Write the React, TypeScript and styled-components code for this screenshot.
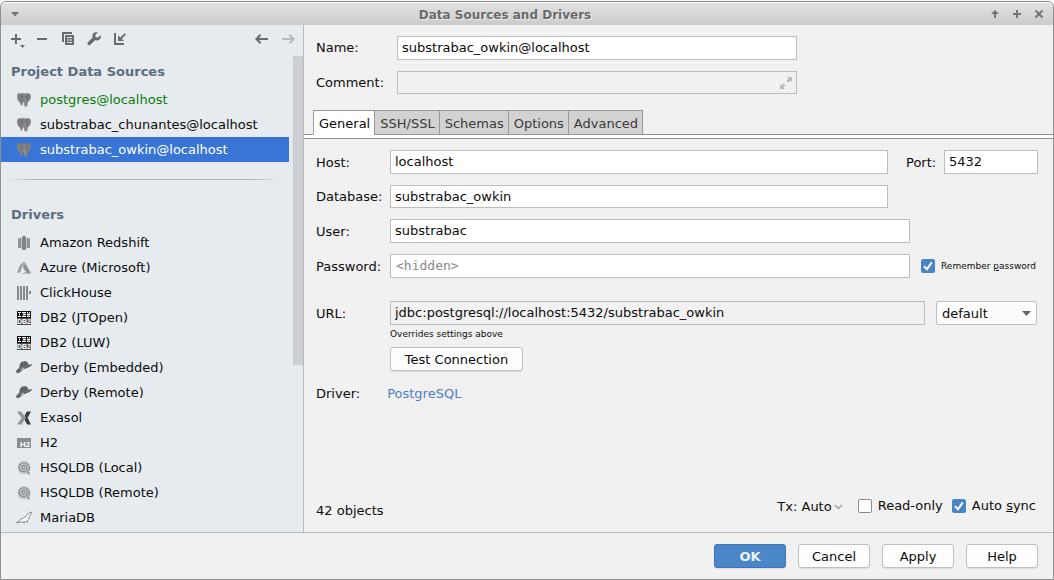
import React, { ReactNode, useState } from "react";
import styled, { createGlobalStyle, css } from "styled-components";

const GlobalStyle = createGlobalStyle`
  *, *::before, *::after { box-sizing: border-box; }
  body { margin: 0; background: #f7f7f7; }
  body, button, input, select {
    font-family: "DejaVu Sans", sans-serif;
    font-size: 13px;
    line-height: 16px;
    color: #0c0c0c;
  }
  button { border: 0; padding: 0; background: none; }
  svg { display: block; flex: none; }
`;

/* ---------- window frame ---------- */

const Page = styled.div`
  height: 100vh;
  min-height: 480px;
  padding-top: 1px;
`;

const Window = styled.div`
  height: 100%;
  display: flex;
  flex-direction: column;
  border: 1px solid #8f8f8f;
  border-radius: 6px 6px 0 0;
  background: #f1f1f1;
  overflow: hidden;
`;

const TitleBar = styled.header`
  flex: none;
  display: flex;
  align-items: center;
  height: 23px;
  padding: 0 3px;
  border-top: 1px solid #f6f6f6;
  background: linear-gradient(#e2e2e2, #cbcbcb);
`;

const Title = styled.h1`
  flex: 1;
  margin: 0;
  padding-top: 2px;
  text-align: center;
  font-size: 12px;
  line-height: 16px;
  font-weight: bold;
  color: #6a6a6a;
  text-shadow: 1px 1px 0 #ececec;
`;

const FrameButton = styled.button`
  width: 22px;
  height: 22px;
  display: grid;
  place-items: center;
  color: #747474;
`;

const Body = styled.div`
  flex: 1;
  min-height: 0;
  display: flex;
`;

/* ---------- sidebar ---------- */

const Sidebar = styled.aside`
  flex: none;
  width: 303px;
  display: flex;
  flex-direction: column;
  background: #e6ebf0;
  border-right: 1px solid #bababa;
`;

const Toolbar = styled.div`
  flex: none;
  display: flex;
  gap: 6px;
  height: 31px;
  padding: 4px 5px 0 5px;
`;

const Spacer = styled.div`
  flex: 1;
`;

const ToolButton = styled.button<{ $disabled?: boolean }>`
  width: 20px;
  height: 20px;
  color: ${(p) => (p.$disabled ? "#b6babd" : "#6b6b6b")};
`;

const ListArea = styled.div`
  flex: 1;
  min-height: 0;
  display: flex;
`;

const ListScroll = styled.nav`
  flex: 1;
  padding-right: 4px;
  overflow: hidden;
`;

const ScrollTrack = styled.div`
  width: 10px;
`;

const ScrollThumb = styled.div`
  height: 65%;
  background: #cdd1d6;
  border: 1px solid #c6cacf;
`;

const GroupTitle = styled.h2`
  margin: 0;
  padding: 8px 10px 7px;
  font-size: 13px;
  line-height: 16px;
  font-weight: bold;
  color: #5f6d7b;
`;

const List = styled.ul`
  list-style: none;
  margin: 0;
  padding: 0;
`;

const ItemButton = styled.button<{ $selected?: boolean; $tone?: string }>`
  width: 100%;
  height: 25px;
  display: flex;
  align-items: center;
  gap: 8px;
  padding-left: 15px;
  text-align: left;
  color: ${(p) => (p.$selected ? "#fff" : p.$tone || "#0c0c0c")};
  background: ${(p) => (p.$selected ? "#3875d6" : "transparent")};
`;

const Separator = styled.hr`
  height: 1px;
  margin: 17px 10px 19px 6px;
  border: 0;
  background: linear-gradient(90deg, transparent, #aeb0b2 10%, #aeb0b2 90%, transparent);
`;

/* ---------- main form ---------- */

const Main = styled.main`
  flex: 1;
  min-width: 0;
  display: flex;
  flex-direction: column;
`;

const Rows = styled.div`
  display: flex;
  flex-direction: column;
  gap: 11px;
`;

const HeadRows = styled(Rows)`
  padding: 11px 256px 16px 12px;
`;

const FormRows = styled(Rows)`
  padding: 11px 15px 0 12px;
`;

const Row = styled.div`
  display: flex;
  align-items: center;
`;

const Label = styled.label<{ $wide?: boolean }>`
  flex: none;
  width: ${(p) => (p.$wide ? 81 : 74)}px;
`;

const FormLabel = styled(Label)`
  padding-top: 1px;
`;

const TextInput = styled.input<{ $low?: boolean; $flat?: boolean }>`
  flex: 1;
  min-width: 0;
  width: 100%;
  height: ${(p) => (p.$low ? 23 : 24)}px;
  padding: ${(p) => (p.$low ? "0 4px" : "0 4px 2px")};
  border: 1px solid #bdbdbd;
  border-radius: 0;
  outline: 0;
  background: ${(p) => (p.$flat ? "#f1f1f1" : "#fff")};
  &[type="password"] {
    padding-left: 5px;
  }
  &[type="password"]::placeholder {
    font-family: "DejaVu Sans Mono", monospace;
    color: #8a8a8a;
    opacity: 1;
  }
`;

const Trailing = styled.div<{ $width: number }>`
  flex: none;
  width: ${(p) => p.$width}px;
  display: flex;
  align-items: center;
`;

const CheckCell = styled(Trailing)`
  padding-left: 11px;
`;

const PortLabel = styled.label`
  flex: 1;
  padding: 1px 0 0 18px;
`;

const PortInput = styled(TextInput)`
  flex: none;
  width: 94px;
`;

const Overlay = styled.div`
  flex: 1;
  display: grid;
  align-items: center;
  > * { grid-area: 1 / 1; }
  > svg { justify-self: end; margin-right: 5px; pointer-events: none; }
`;

const TabList = styled.div`
  display: flex;
  padding-left: 10px;
`;

const Tab = styled.button<{ $active: boolean }>`
  position: relative;
  z-index: 1;
  height: 25px;
  margin: 0 0 -1px -1px;
  padding: 3px 4px 0 5px;
  border: 1px solid #999;
  color: #3a3a3a;
  background: #d2d2d2;
  ${(p) =>
    p.$active &&
    css`
      color: #0c0c0c;
      background: #fff;
      border-bottom-color: #fff;
    `}
`;

const TabStrip = styled.div`
  height: 5px;
  border: solid #919191;
  border-width: 1px 0;
  background: #fff;
`;

const CheckLabel = styled.label<{ $small?: boolean }>`
  display: flex;
  align-items: center;
  gap: 6px;
  white-space: nowrap;
  ${(p) => p.$small && "font-size: 9px; line-height: 12px;"}
`;

const CheckBox = styled.span`
  display: grid;
  place-items: center;
  > * { grid-area: 1 / 1; }
  > svg { pointer-events: none; visibility: hidden; }
  > input:checked + svg { visibility: visible; }
`;

const CheckInput = styled.input`
  appearance: none;
  width: 14px;
  height: 14px;
  margin: 0;
  border: 1px solid #8c8c8c;
  border-radius: 2px;
  background: #fff;
  &:checked { border-color: #4886c8; background: #4886c8; }
`;

const UrlRow = styled(Row)`
  margin-top: 12px;
`;

const SelectBox = styled(Overlay)`
  margin-left: 11px;
  > svg { margin-right: 7px; }
`;

const Select = styled.select`
  appearance: none;
  width: 101px;
  height: 24px;
  padding: 1px 5px 0;
  border: 1px solid #bfbfbf;
  border-radius: 2px;
  background: #fcfcfc;
`;

const Below = styled.div`
  display: flex;
  flex-direction: column;
  align-items: flex-start;
  padding-left: 86px;
`;

const Hint = styled.p`
  margin: 3px 0 7px;
  font-size: 9px;
  line-height: 12px;
`;

const PushButton = styled.button<{ $primary?: boolean; $wide?: boolean }>`
  min-width: ${(p) => (p.$wide ? 133 : 72)}px;
  height: 24px;
  padding-top: 2px;
  border: 1px solid ${(p) => (p.$primary ? "#3d74b3" : "#bfbfbf")};
  border-radius: 3px;
  background: ${(p) => (p.$primary ? "#4a86c8" : "#fdfdfd")};
  color: ${(p) => (p.$primary ? "#eef3f9" : "#0c0c0c")};
  font-weight: ${(p) => (p.$primary ? "bold" : "normal")};
  box-shadow: 0 1px 0 #dedede;
`;

const DriverRow = styled.div`
  display: flex;
  gap: 27px;
  padding: 15px 12px 0;
`;

const Link = styled.a`
  color: #4f7cc4;
  text-decoration: none;
`;

const StatusRow = styled.div`
  display: flex;
  align-items: flex-end;
  margin-top: auto;
  padding: 0 17px 13px 12px;
`;

const StatusGroup = styled.div`
  display: flex;
  align-items: center;
  height: 26px;
  gap: 9px;
`;

const TxButton = styled.button`
  display: flex;
  align-items: center;
  gap: 2px;
  margin-right: 6px;
  padding-top: 2px;
`;

const Footer = styled.footer`
  flex: none;
  display: flex;
  justify-content: flex-end;
  gap: 12px;
  padding: 11px 15px;
  border-top: 1px solid #bababa;
`;

/* ---------- icons ---------- */

const Glyph = ({ size = 16, children }: { size?: number; children: ReactNode }) => (
  <svg width={size} height={size} viewBox={`0 0 ${size} ${size}`} fill="currentColor" aria-hidden="true">
    {children}
  </svg>
);

const CheckMark = () => (
  <svg width="14" height="14" viewBox="0 0 14 14" aria-hidden="true">
    <path d="M3 7.2 6 10.2 10.8 3.4" fill="none" stroke="#fff" strokeWidth="2" />
  </svg>
);

const Elephant = () => (
  <Glyph>
    <path d="M1 3.2 2.4 1.2 5 1.4 7 1 9.6 1.4 12.4 1 14.6 2.4 15 5 13.8 8.6 12.6 9.6 11.8 10.4 11.4 13.6 10.4 14.8 8.8 14.6 8.2 13 8 10.6 7 10.4 6.6 12 6.2 13.6 4.6 13.2 4 10.6 2.4 9.4 1.2 6.4Z" fill="#828282" />
    <path d="M5 2.6 4.4 5 4.8 8.2 6.4 9.6M11 2.4 11.8 4.8 11.4 7.8 10.2 9.2" stroke="#686868" strokeWidth=".8" fill="none" />
    <path d="M6 4.4h1v1H6ZM9.4 4.4h1v1h-1Z" fill="#4a4a4a" />
    <path d="M8.8 5.6 9.2 9.6 9.8 13.4" stroke="#959595" strokeWidth="1" fill="none" />
  </Glyph>
);

const Redshift = () => (
  <Glyph>
    <path d="M2 3.6 5 2.8V13.2L2 12.4ZM14 3.6 11 2.8V13.2L14 12.4Z" fill="#8f9193" />
    <path d="M6 1.6 8 1 10 1.6V14.4L8 15 6 14.4Z" fill="#818385" />
    <path d="M5 3H6V13H5ZM10 3H11V13H10Z" fill="#c3c7ca" />
  </Glyph>
);

const Azure = () => (
  <Glyph>
    <path d="M7.8 1.6 3.8 5.4 1 12.8H4.2Z" fill="#9c9ea0" />
    <path d="M8.6 1.8 15 13.4H5L10.6 12.2 7.2 8.4Z" fill="#8f9193" />
    <path d="M7.8 1.6 6.6 4.8 7.2 8.4 8.8 5 8.6 1.8Z" fill="#a6a8aa" />
  </Glyph>
);

const ClickHouse = () => (
  <Glyph>
    <path d="M1 1h2v14H1ZM4 1h2v14H4ZM7 1h2v14H7ZM10 1h2v14h-2ZM13 6h2v3h-2Z" fill="#858789" />
  </Glyph>
);

const Db2 = () => (
  <Glyph>
    <rect x="1" y="1" width="14" height="7" fill="#0e0e0e" />
    <path d="M2 2.5h3M6 2.5h4M11 2.5h1M13 2.5h1M3 4.5h1M7 4.5h3M11 4.5h3M2 6.5h3M6 6.5h4M11 6.5h3" stroke="#fff" />
    <path d="M3 3.5h1M6.5 3.5h3M11 3.5h3M3 5.5h1M6.5 5.5h3M11 5.5h3" stroke="#777" />
    <rect x="1" y="8" width="14" height="7" fill="#4c4d4f" />
    <text x="8" y="14" textAnchor="middle" fontFamily="Liberation Sans, sans-serif" fontSize="7" fontWeight="bold" fill="#fff">DB2</text>
  </Glyph>
);

const Derby = () => (
  <Glyph>
    <path d="M3.4 7.4C3.4 4.4 4.8 2.2 6 1.8 8 1 10.4 1 11.4 2.2L12.6 4.8 15.9 4.2 15.8 5.4 12.4 7.6 6.6 9.8 3.8 12.4 1 13.2 0 11.6.6 10.2Z" fill="#5f6163" />
    <path d="M3 8.6 8.6 6.8 12.4 5.2" stroke="#8c8f92" strokeWidth=".6" fill="none" />
    <path d="M4.6 10 8 8.2" stroke="#dde2e6" strokeWidth=".8" fill="none" />
  </Glyph>
);

const Exasol = () => (
  <Glyph>
    <path d="M1 1.4H5.2L9.8 7.8 5.6 14.6H1L5.6 8Z" fill="#929496" />
    <path d="M10.8 1.4H15L11.6 7.8 15 14.6H11.2L8.6 10 9.8 7.8 8.6 5.6Z" fill="#3a3c3e" />
  </Glyph>
);

const H2 = () => (
  <Glyph>
    <rect x="1" y="3" width="14" height="10" fill="#8b8d8f" />
    <text x="9" y="12" textAnchor="middle" fontFamily="Liberation Sans, sans-serif" fontSize="8" fontWeight="bold" fill="#fff">H2</text>
  </Glyph>
);

const Hsqldb = () => (
  <Glyph>
    <circle cx="8" cy="7.6" r="6.6" fill="#c3c6c8" />
    <path d="M12.6 11C14.6 7 12 2.8 8.2 2.8 4.8 2.8 3 5.2 3.2 7.8 3.4 10.6 5.6 12 8 11.8 10.4 11.6 11.4 9.4 10.8 7.4 10.2 5.4 7.6 4.8 6.4 6.2 5.4 7.4 6 9.2 7.4 9.4 8.6 9.4 9 8 8.2 7.4" fill="none" stroke="#858789" strokeWidth="1.1" />
    <path d="M11.4 10.8 13.8 12.6 13.6 15 11.2 13.4" fill="#97999b" />
  </Glyph>
);

const MariaDb = () => (
  <Glyph>
    <path d="M.4 12.6 3 11.4 4.6 9 7.8 7.8 10.4 6 12.2 3.4 15.6 2 14.8 4.4 13.6 6.4 12.8 9.4 11 11 11.6 12.4 9.6 11.6 7.6 11.8 8.4 13.2 6.4 12Z" fill="#f4f6f8" stroke="#77797b" strokeWidth=".8" />
  </Glyph>
);

/* ---------- data ---------- */

const sources = [
  { name: "postgres@localhost", tone: "#0a7d0a" },
  { name: "substrabac_chunantes@localhost" },
  { name: "substrabac_owkin@localhost" },
];

const drivers: { name: string; Icon: () => React.JSX.Element }[] = [
  { name: "Amazon Redshift", Icon: Redshift },
  { name: "Azure (Microsoft)", Icon: Azure },
  { name: "ClickHouse", Icon: ClickHouse },
  { name: "DB2 (JTOpen)", Icon: Db2 },
  { name: "DB2 (LUW)", Icon: Db2 },
  { name: "Derby (Embedded)", Icon: Derby },
  { name: "Derby (Remote)", Icon: Derby },
  { name: "Exasol", Icon: Exasol },
  { name: "H2", Icon: H2 },
  { name: "HSQLDB (Local)", Icon: Hsqldb },
  { name: "HSQLDB (Remote)", Icon: Hsqldb },
  { name: "MariaDB", Icon: MariaDb },
];

const tabs = ["General", "SSH/SSL", "Schemas", "Options", "Advanced"];

/* ---------- parts ---------- */

const Check = ({ checked, small, children }: { checked?: boolean; small?: boolean; children: ReactNode }) => (
  <CheckLabel $small={small}>
    <CheckBox>
      <CheckInput type="checkbox" defaultChecked={checked} />
      <CheckMark />
    </CheckBox>
    <span>{children}</span>
  </CheckLabel>
);

const SidebarTools = () => (
  <Toolbar>
    <ToolButton aria-label="Add">
      <Glyph size={20}>
        <path d="M9 5h2v4h4v2h-4v4H9v-4H5V9h4ZM14 16h5l-2.5 3Z" />
      </Glyph>
    </ToolButton>
    <ToolButton aria-label="Remove">
      <Glyph size={20}>
        <path d="M5 9h10v2H5Z" />
      </Glyph>
    </ToolButton>
    <ToolButton aria-label="Duplicate">
      <Glyph size={20}>
        <path d="M4 3h10v2H6v8H4Z" />
        <path fillRule="evenodd" d="M7 6h9v10H7ZM9 8v1h5V8ZM9 10.5v1h5v-1ZM9 13v1h5v-1Z" />
      </Glyph>
    </ToolButton>
    <ToolButton aria-label="Properties">
      <Glyph size={20}>
        <path d="M16.5 6.2 13.9 8.6 11.7 8.2 11.3 6.1 13.8 3.5C12 2.8 10.2 3.2 9.2 4.5 8.2 5.8 8.2 7 8.7 8.5L3.6 13.4C2.6 14.6 4.8 17.2 6.2 16L11.2 11.1C12.8 11.7 14.4 11.6 15.6 10.5 16.9 9.2 17.2 7.8 16.5 6.2Z" />
      </Glyph>
    </ToolButton>
    <ToolButton aria-label="Make global">
      <Glyph size={20}>
        <path d="M4 4h2v10h8v2H4Z" />
        <path d="M8 6v6h6l-2.2-2.2L16 5.6 14.6 4.2 10.3 8.4Z" />
      </Glyph>
    </ToolButton>
    <Spacer />
    <ToolButton aria-label="Back">
      <Glyph size={20}>
        <path d="M16 10H5M8.6 5.8 4.4 10l4.2 4.2" fill="none" stroke="currentColor" strokeWidth="2" />
      </Glyph>
    </ToolButton>
    <ToolButton aria-label="Forward" $disabled>
      <Glyph size={20}>
        <path d="M4 10H15M11.4 5.8 15.6 10l-4.2 4.2" fill="none" stroke="currentColor" strokeWidth="2" />
      </Glyph>
    </ToolButton>
  </Toolbar>
);

export default function App() {
  const [tab, setTab] = useState("General");
  const [source, setSource] = useState("substrabac_owkin@localhost");

  return (
    <Page>
      <GlobalStyle />
      <Window>
        <TitleBar>
          <FrameButton aria-label="Window menu">
            <Glyph size={12}>
              <path d="M2 4h8L6 8.5Z" />
            </Glyph>
          </FrameButton>
          <Title>Data Sources and Drivers</Title>
          <FrameButton aria-label="Shade">
            <Glyph size={12}>
              <path d="M6 2 10 6H7v4H5V6H2Z" />
            </Glyph>
          </FrameButton>
          <FrameButton aria-label="Maximize">
            <Glyph size={12}>
              <path d="M5 2h2v3h3v2H7v3H5V7H2V5h3Z" />
            </Glyph>
          </FrameButton>
          <FrameButton aria-label="Close">
            <Glyph size={12}>
              <path d="M2.5 2.5 9.5 9.5M9.5 2.5 2.5 9.5" stroke="currentColor" strokeWidth="2" />
            </Glyph>
          </FrameButton>
        </TitleBar>

        <Body>
          <Sidebar>
            <SidebarTools />
            <ListArea>
              <ListScroll>
                <GroupTitle>Project Data Sources</GroupTitle>
                <List>
                  {sources.map((s) => (
                    <li key={s.name}>
                      <ItemButton $tone={s.tone} $selected={s.name === source} onClick={() => setSource(s.name)}>
                        <Elephant />
                        {s.name}
                      </ItemButton>
                    </li>
                  ))}
                </List>
                <Separator />
                <GroupTitle>Drivers</GroupTitle>
                <List>
                  {drivers.map(({ name, Icon }) => (
                    <li key={name}>
                      <ItemButton>
                        <Icon />
                        {name}
                      </ItemButton>
                    </li>
                  ))}
                </List>
              </ListScroll>
              <ScrollTrack>
                <ScrollThumb />
              </ScrollTrack>
            </ListArea>
          </Sidebar>

          <Main>
            <HeadRows>
              <Row>
                <Label $wide htmlFor="name">Name:</Label>
                <TextInput id="name" defaultValue="substrabac_owkin@localhost" />
              </Row>
              <Row>
                <Label $wide htmlFor="comment">Comment:</Label>
                <Overlay>
                  <TextInput id="comment" $low $flat />
                  <svg width="12" height="12" viewBox="0 0 12 12" fill="#b3b9be" aria-hidden="true">
                    <path d="M7 0h5v5l-1.6-1.6L8.2 5.6 6.4 3.8 8.6 1.6ZM0 7l1.6 1.6 2-2L5.4 8.4l-2 2L5 12H0Z" />
                  </svg>
                </Overlay>
              </Row>
            </HeadRows>

            <TabList role="tablist">
              {tabs.map((t) => (
                <Tab key={t} role="tab" aria-selected={t === tab} $active={t === tab} onClick={() => setTab(t)}>
                  {t}
                </Tab>
              ))}
            </TabList>
            <TabStrip />

            <FormRows>
              <Row>
                <FormLabel htmlFor="host">Host:</FormLabel>
                <TextInput id="host" defaultValue="localhost" />
                <Trailing $width={150}>
                  <PortLabel htmlFor="port">Port:</PortLabel>
                  <PortInput id="port" defaultValue="5432" />
                </Trailing>
              </Row>
              <Row>
                <FormLabel htmlFor="database">Database:</FormLabel>
                <TextInput id="database" $low defaultValue="substrabac_owkin" />
                <Trailing $width={150} />
              </Row>
              <Row>
                <FormLabel htmlFor="user">User:</FormLabel>
                <TextInput id="user" defaultValue="substrabac" />
                <Trailing $width={128} />
              </Row>
              <Row>
                <FormLabel htmlFor="password">Password:</FormLabel>
                <TextInput id="password" type="password" placeholder="<hidden>" />
                <CheckCell $width={128}>
                  <Check small checked>
                    Remember <u>p</u>assword
                  </Check>
                </CheckCell>
              </Row>
              <UrlRow>
                <FormLabel htmlFor="url">URL:</FormLabel>
                <TextInput id="url" $flat defaultValue="jdbc:postgresql://localhost:5432/substrabac_owkin" />
                <Trailing $width={113}>
                  <SelectBox>
                    <Select aria-label="URL type" defaultValue="default">
                      <option>default</option>
                    </Select>
                    <svg width="9" height="5" viewBox="0 0 9 5" fill="#666" aria-hidden="true">
                      <path d="M0 0h9L4.5 5Z" />
                    </svg>
                  </SelectBox>
                </Trailing>
              </UrlRow>
            </FormRows>
            <Below>
              <Hint>Overrides settings above</Hint>
              <PushButton $wide>Test Connection</PushButton>
            </Below>
            <DriverRow>
              <span>Driver:</span>
              <Link href="#postgresql">PostgreSQL</Link>
            </DriverRow>

            <StatusRow>
              <span>42 objects</span>
              <Spacer />
              <StatusGroup>
                <TxButton>
                  Tx: Auto
                  <svg width="9" height="6" viewBox="0 0 9 6" fill="none" stroke="#9aa5b0" aria-hidden="true">
                    <path d="M1 1 4.5 4.5 8 1" strokeWidth="1.5" />
                  </svg>
                </TxButton>
                <Check>Read-only</Check>
                <Check checked>
                  Auto <u>s</u>ync
                </Check>
              </StatusGroup>
            </StatusRow>
          </Main>
        </Body>

        <Footer>
          <PushButton $primary>OK</PushButton>
          <PushButton>Cancel</PushButton>
          <PushButton>Apply</PushButton>
          <PushButton>Help</PushButton>
        </Footer>
      </Window>
    </Page>
  );
}
